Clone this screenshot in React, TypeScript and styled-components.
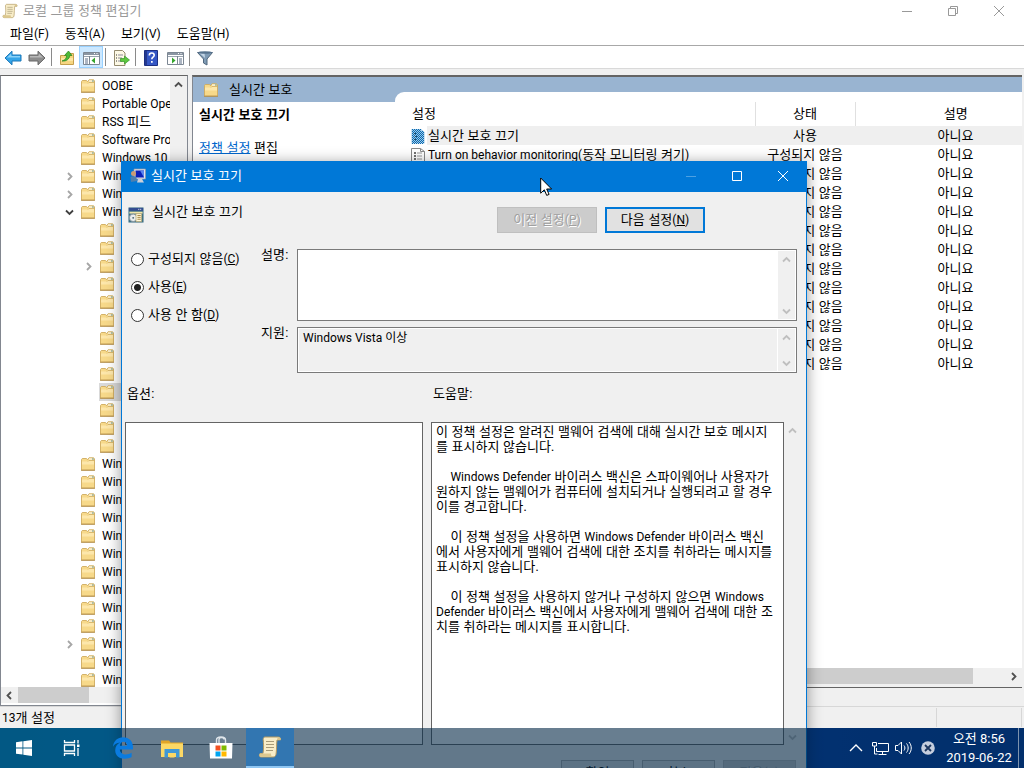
import React, { Fragment } from "react";
import styled, { createGlobalStyle, css } from "styled-components";

const GlobalStyle = createGlobalStyle`
  * { box-sizing: border-box; }
  body {
    margin: 0;
    font: 13px/18px "Liberation Sans", "Noto Sans CJK KR", sans-serif;
    color: #000;
  }
  button, input, textarea { font: inherit; color: inherit; margin: 0; }
`;

/* ---------- text ---------- */

const Latin = styled.span`
  font-family: Roboto, "Liberation Sans", sans-serif;
  font-size: 12px;
  line-height: 1;
`;

/* Sets the Latin words of a Korean label in their own face. */
function Mixed({ text }: { text: string }) {
  const parts = text.split(/([A-Za-z0-9()]+(?: [A-Za-z0-9()]+)*)/);
  return (
    <>
      {parts.map((p, i) =>
        i % 2 ? <Latin key={i}>{p}</Latin> : <Fragment key={i}>{p}</Fragment>
      )}
    </>
  );
}

function Access({ text, letter }: { text: string; letter: string }) {
  return (
    <span>
      {text}
      <Latin>
        (<u>{letter}</u>)
      </Latin>
    </span>
  );
}

/* ---------- icons ---------- */

const Folder = () => (
  <svg width="16" height="16" viewBox="0 0 16 16" aria-hidden="true">
    <path d="M1.500 3.500l.8-1h4.200l1 1.200L9 1.800h4.500l1 .9V14h-13z" fill="#f7d98a" stroke="#cfab5f" strokeWidth=".9" />
    <path d="M9 3h3" stroke="#fff" />
    <path d="M12 3h1.800" stroke="#6aa7c4" />
    <path d="M2 5.500h6l1-1h5v4H2z" fill="#fde7ab" />
    <path d="M8 5.500l1-1h5.500" fill="none" stroke="#d1ae62" strokeWidth=".8" />
    <path d="M1 14.300h14" stroke="#b08c48" strokeWidth=".9" />
  </svg>
);

const Scroll = ({ size = 16 }: { size?: number }) => (
  <svg width={size} height={size} viewBox="0 0 24 24" aria-hidden="true">
    <path
      d="M7 2h13c2 0 3 1.200 2.500 3H19c-.6 4-.2 8-.8 13-.2 2.500-1 4-3 4H3c-1.600 0-2.200-2-1-3.500h3C6 13 5.500 8 5.200 4.500 5.200 3 6 2 7 2z"
      fill="#f8edc8"
      stroke="#b29a63"
    />
    <path d="M19 5c.2-1.500.6-2.500 1.500-3 2 .3 2.500 1.500 2 3z" fill="#d8c48c" />
    <path d="M2 18.500h11c0 2 .4 3 1.800 3.500H3c-1.600 0-2-2-1-3.500z" fill="#dcc88f" />
    <path d="M8 6.500h8M8 9.500h8M8 12.500h8M8 15.500h7" stroke="#a89b78" />
  </svg>
);

const Chevron = ({ dir, color, size = 9 }: { dir: "up" | "down" | "left" | "right"; color: string; size?: number }) => {
  const d = {
    up: "M1 6.500L4.500 3L8 6.500",
    down: "M1 2.500L4.500 6L8 2.500",
    left: "M6 1L2.500 4.500L6 8",
    right: "M3 1L6.500 4.500L3 8",
  }[dir];
  return (
    <svg width={size} height={size} viewBox="0 0 9 9" aria-hidden="true">
      <path d={d} fill="none" stroke={color} strokeWidth="1.800" />
    </svg>
  );
};

const BackArrow = () => (
  <svg width="18" height="16" viewBox="0 0 18 16">
    <path d="M1 8L8 1.200v3.800h9v6H8v3.800z" fill="#35a5e8" stroke="#1b76b8" />
    <path d="M3 7.500L7.300 3.500v2.500h8.700v1.500z" fill="#8bd2f8" />
  </svg>
);
const ForwardArrow = () => (
  <svg width="18" height="16" viewBox="0 0 18 16">
    <path d="M17 8L10 1.200v3.800H1v6h9v3.800z" fill="#8d8d8d" stroke="#666" />
    <path d="M15 7.500L10.700 3.500v2.500H2v1.500z" fill="#b9b9b9" />
  </svg>
);
const UpFolder = () => (
  <svg width="16" height="16" viewBox="0 0 16 16">
    <path d="M1.500 5.500h5l1-2h7v11h-13z" fill="#f6d681" stroke="#c59f4c" />
    <path d="M2 8h12v3H2z" fill="#fde6a4" />
    <path d="M3 11c3.500-1 4.500-3 4.700-5.500H5.500L9.500 1l3.500 4.500h-2.300C10.500 9 7.500 11.500 3 11z" fill="#4cba37" stroke="#25831b" strokeWidth=".7" />
  </svg>
);
const Panes = ({ flip = false }: { flip?: boolean }) => (
  <svg width="17" height="16" viewBox="0 0 17 16">
    <path d="M.5 2.500h16v12H.5z" fill="#fff" stroke="#7c8793" />
    <path d="M1 3h15v2H1z" fill="#8b96a3" />
    <path d="M11 3.500h1M13.500 3.500h1" stroke="#fff" />
    <path d="M1 6.500h15" stroke="#9aa4b0" />
    {flip ? (
      <g>
        <path d="M10.500 6v8.500" stroke="#7c8793" />
        <path d="M12 9h3M12 11h3M12 13h3" stroke="#5a6c86" />
        <path d="M5 7.500L8.500 10.500L5 13.500z" fill="#35a52c" />
      </g>
    ) : (
      <g>
        <path d="M6.500 6v8.500" stroke="#7c8793" />
        <path d="M2 9h3M2 11h3M2 13h3" stroke="#5a6c86" />
        <path d="M12 7.500L8.500 10.500l3.500 3z" fill="#35a52c" />
      </g>
    )}
  </svg>
);
const Export = () => (
  <svg width="17" height="16" viewBox="0 0 17 16">
    <path d="M1.500.500h8L12 3v12.500H1.500z" fill="#fdf9e6" stroke="#948b6f" />
    <path d="M3 5h1M3 8h1M3 11h1" stroke="#333" />
    <path d="M5 5h5M5 8h4M5 11h4" stroke="#8b8b9b" />
    <path d="M7.500 8.500h4V6l5 4-5 4v-2.500h-4z" fill="#5dc83f" stroke="#37952a" strokeWidth=".7" />
  </svg>
);
const Help = () => (
  <svg width="14" height="16" viewBox="0 0 14 16">
    <path d="M.5.500h13v15H.5z" fill="#3557c5" stroke="#1c2f82" />
    <path d="M1 1h2v14H1z" fill="#24398f" />
    <path d="M5.300 5.500C5.300 3.800 6.300 3 7.700 3c1.500 0 2.500.8 2.500 2.200 0 2-2.400 2-2.400 4" fill="none" stroke="#fff" strokeWidth="1.600" />
    <path d="M7 11h1.700v1.800H7z" fill="#fff" />
  </svg>
);
const Funnel = () => (
  <svg width="16" height="16" viewBox="0 0 16 16">
    <path d="M.5 2.500h15L10 9v6L6.500 13V9z" fill="#7f9bb5" stroke="#50677d" />
    <path d="M2.500 3h5L8 8z" fill="#c4d6e6" />
    <ellipse cx="8" cy="2.500" rx="7" ry="1.300" fill="#57738e" />
  </svg>
);
const Sheet = ({ selected = false }: { selected?: boolean }) => (
  <svg width="14" height="16" viewBox="0 0 14 16">
    {selected ? (
      <g>
        <path d="M.5 1h9.500l3.500 3v11.500H.5z" fill="#9cc8e8" />
        <path d="M1 1.500h9M1 3.500h11M1 5.500h12M1 7.500h12M1 9.500h12M1 11.500h12M1 13.500h12M1 15.500h12" stroke="#0a6ab0" strokeDasharray="1 1" />
        <path d="M2 2.500h8M2 4.500h11M2 6.500h11M2 8.500h11M2 10.500h11M2 12.500h11M2 14.500h11" stroke="#0a6ab0" strokeDasharray="1 1" />
        <path d="M3 5.500h2M4 8.500h2M3 11.500h2" stroke="#1c4a66" />
      </g>
    ) : (
      <g>
        <path d="M.5 1.500h9l4 3v11H.5z" fill="#fff" stroke="#8a8a8a" />
        <path d="M9.500 1.500v3h4" fill="none" stroke="#8a8a8a" />
        <path d="M3 6h2M3 9h2M3 12h2" stroke="#444" strokeWidth="1.500" />
        <path d="M6 6h5M6 9h5M6 12h5" stroke="#999" />
      </g>
    )}
  </svg>
);
const PolicyMonitor = () => (
  <svg width="16" height="16" viewBox="0 0 16 16">
    <path d="M4 1h11.500v10H4z" fill="#dfe3ec" stroke="#8c96a8" strokeWidth=".7" />
    <path d="M5.500 2.500h8.500v7H5.500z" fill="#0b1fb8" />
    <path d="M10 2.500h4v7z" fill="#5c86f0" />
    <path d="M8 11h4l2 3.500H7z" fill="#cdd1d9" />
    <circle cx="3.500" cy="5.500" r="2.500" fill="#c99b76" />
    <path d="M.5 9.500C1 8 5.500 7.500 6.500 9.500L7 13l-6 1z" fill="#4d7fae" />
  </svg>
);
const PolicySheet = () => (
  <svg width="16" height="16" viewBox="0 0 17 17">
    <path d="M.5.500h16v16H.5z" fill="#3a6f85" />
    <path d="M1 1h15v3H1z" fill="#344d91" />
    <path d="M11 2.500h1M13 2.500h1" stroke="#fff" />
    <path d="M1.500 5h14v2h-14z" fill="#f1e5a9" />
    <circle cx="5.500" cy="11.500" r="4" fill="#e8ecee" stroke="#85949c" />
    <circle cx="5.500" cy="11.500" r="1" fill="#47636f" />
    <path d="M8.500 7h6v8.500h-6z" fill="#fff7d8" stroke="#b3a067" strokeWidth=".7" />
    <path d="M10 9h3.500M10 11h3.500M10 13h3.500" stroke="#a0803d" />
  </svg>
);

const WinMin = () => (
  <svg width="10" height="10" viewBox="0 0 10 10"><path d="M0 5.500h10" stroke="currentColor" /></svg>
);
const WinMax = () => (
  <svg width="10" height="10" viewBox="0 0 10 10"><path d="M.5.500h9v9h-9z" fill="none" stroke="currentColor" /></svg>
);
const WinRestore = () => (
  <svg width="10" height="10" viewBox="0 0 10 10">
    <path d="M.5 2.500h7v7h-7zM2.500 2.500v-2h7v7h-2" fill="none" stroke="currentColor" />
  </svg>
);
const WinClose = () => (
  <svg width="10" height="10" viewBox="0 0 10 10"><path d="M0 0l10 10M10 0L0 10" stroke="currentColor" /></svg>
);

/* ---------- desktop and main window ---------- */

const Desktop = styled.div`
  position: relative;
  height: 100vh;
  min-height: 400px;
  overflow: hidden;
  display: flex;
  flex-direction: column;
  background: linear-gradient(90deg, #00a0e0 0%, #00a0e8 12%, #0040b0 78%, #003aa5 100%);
`;

const AppWindow = styled.main`
  flex: 1;
  min-height: 0;
  display: flex;
  flex-direction: column;
  background: #f0f0f0;
`;

const TitleBar = styled.header`
  display: flex;
  align-items: center;
  height: 22px;
  padding: 0 2px;
  gap: 5px;
  background: #fff;
  color: #999;
`;

const Title = styled.h1`
  flex: 1;
  margin: 0;
  font-size: 13px;
  line-height: 18px;
  font-weight: 400;
`;

const WindowButton = styled.button<{ $faded?: boolean }>`
  width: 46px;
  height: 20px;
  border: 0;
  padding: 0;
  background: none;
  display: flex;
  align-items: center;
  justify-content: center;
  opacity: ${(p) => (p.$faded ? 0.3 : 1)};
`;

const Controls = styled.div`
  display: flex;
`;

const MenuBar = styled.nav`
  display: flex;
  height: 24px;
  padding: 0 2px;
  background: #fff;
  border-bottom: 1px solid #a8a8a8;
`;

const MenuItem = styled.button`
  border: 0;
  padding: 0 8px;
  background: none;
`;

const ToolBar = styled.div`
  display: flex;
  align-items: center;
  height: 23px;
  padding-left: 1px;
  background: #fff;
  border-bottom: 1px solid #d9d9d9;
`;

const ToolButton = styled.button<{ $on?: boolean }>`
  width: 24px;
  height: 22px;
  padding: 1px 0 0;
  display: flex;
  align-items: center;
  justify-content: center;
  border: 1px solid ${(p) => (p.$on ? "#99d1ff" : "transparent")};
  background: ${(p) => (p.$on ? "#cce8ff" : "none")};
`;

const ToolDivider = styled.span`
  width: 1px;
  height: 18px;
  margin: 0 3px 0 2px;
  background: #8a8a8a;
`;

const Workspace = styled.div`
  flex: 1;
  min-height: 0;
  display: flex;
  gap: 4px;
  padding: 6px 2px 0 0;
`;

const TreePane = styled.aside`
  width: 188px;
  flex: none;
  display: flex;
  flex-direction: column;
  padding-bottom: 2px;
  border: 1px solid #828790;
  border-top-color: #646464;
  background: #fff;
`;

const TreeBody = styled.div`
  flex: 1;
  min-height: 0;
  display: flex;
`;

const Tree = styled.ul`
  flex: 1;
  min-width: 0;
  margin: 0;
  padding: 1px 0 0;
  list-style: none;
  overflow: hidden;
`;

const TreeRow = styled.li<{ $child?: boolean }>`
  display: flex;
  align-items: center;
  gap: 5px;
  height: 18px;
  padding-left: ${(p) => (p.$child ? 81 : 62)}px;
  white-space: nowrap;
`;

const Twisty = styled.span`
  width: 12px;
  flex: none;
  display: flex;
  justify-content: center;
`;

const TreeLabel = styled.span<{ $selected?: boolean }>`
  display: flex;
  align-items: center;
  gap: 6px;
  height: 18px;
  ${(p) =>
    p.$selected &&
    css`
      background: #d9d9d9;
      flex: 1;
    `}
`;

const BarTrack = styled.div<{ $vertical?: boolean }>`
  display: flex;
  flex-direction: ${(p) => (p.$vertical ? "column" : "row")};
  justify-content: space-between;
  background: #f0f0f0;
  ${(p) => (p.$vertical ? "width: 17px;" : "height: 16px;")}
  flex: none;
`;

const BarButton = styled.button`
  width: 17px;
  height: 16px;
  border: 0;
  padding: 0;
  background: none;
  display: flex;
  align-items: center;
  justify-content: center;
`;

const BarThumb = styled.div<{ $grow: number }>`
  flex: ${(p) => p.$grow} 1 0;
  background: #cdcdcd;
`;

const BarSpace = styled.div<{ $grow: number }>`
  flex: ${(p) => p.$grow} 1 0;
`;

function VerticalBar({ color = "#bfbfbf" }: { color?: string }) {
  return (
    <BarTrack $vertical>
      <BarButton type="button" aria-label="위로 스크롤"><Chevron dir="up" color={color} /></BarButton>
      <BarButton type="button" aria-label="아래로 스크롤"><Chevron dir="down" color={color} /></BarButton>
    </BarTrack>
  );
}

function HorizontalBar({ thumb }: { thumb: number }) {
  return (
    <BarTrack>
      <BarButton type="button" aria-label="왼쪽으로 스크롤"><Chevron dir="left" color="#505050" /></BarButton>
      <BarThumb $grow={thumb} />
      <BarSpace $grow={100 - thumb} />
      <BarButton type="button" aria-label="오른쪽으로 스크롤"><Chevron dir="right" color="#505050" /></BarButton>
    </BarTrack>
  );
}

const Details = styled.section`
  flex: 1;
  min-width: 0;
  margin-bottom: 18px;
  display: flex;
  flex-direction: column;
  border: 1px solid #828790;
  border-width: 2px 0 1px 1px;
  border-color: #646464 #e3e3e3 #646464 #828790;
  background: #99b4d1;
`;

const DetailsBody = styled.div`
  flex: 1;
  min-height: 0;
  display: flex;
`;

const Summary = styled.div`
  width: 202px;
  flex: none;
  display: flex;
  flex-direction: column;
`;

const SummaryHeader = styled.div`
  display: flex;
  align-items: center;
  gap: 10px;
  height: 25px;
  padding-left: 10px;
`;

const SummaryText = styled.div`
  flex: 1;
  padding: 4px 6px;
  background: #fff;
`;

const PolicyName = styled.h2`
  margin: 0 0 15px;
  font-size: 13px;
  line-height: 18px;
  font-weight: 700;
`;

const EditLink = styled.a`
  color: #0066cc;
  text-decoration: underline;
`;

const ListPane = styled.div`
  flex: 1;
  min-width: 0;
  margin-top: 15px;
  padding-top: 10px;
  overflow: hidden;
  background: #fff;
  border-top-left-radius: 9px;
`;

const PolicyTable = styled.table`
  width: 100%;
  min-width: 661px;
  table-layout: fixed;
  border-collapse: collapse;
`;

const HeadCell = styled.th<{ $width?: number; $first?: boolean }>`
  width: ${(p) => (p.$width ? `${p.$width}px` : "auto")};
  height: 24px;
  padding: ${(p) => (p.$first ? "0 0 0 17px" : "0")};
  text-align: ${(p) => (p.$first ? "left" : "center")};
  font-weight: 400;
  border-left: ${(p) => (p.$first ? "0" : "1px solid #e0e0e0")};
`;

const Cell = styled.td<{ $selected?: boolean }>`
  height: 19px;
  padding: 0;
  text-align: center;
  white-space: nowrap;
  background: ${(p) => (p.$selected ? "#efefef" : "none")};
`;

const NameCell = styled.td`
  height: 19px;
  padding: 0 0 0 16px;
`;

const NameBox = styled.div`
  display: flex;
  align-items: center;
  gap: 2px;
  height: 19px;
  white-space: nowrap;
`;

const NameText = styled.span<{ $selected?: boolean }>`
  flex: 1;
  height: 19px;
  line-height: 19px;
  padding-left: 1px;
  background: ${(p) => (p.$selected ? "#efefef" : "none")};
`;

const DetailsFoot = styled.div`
  background: #f0f0f0;
  padding-bottom: 3px;
`;

const StatusBar = styled.footer`
  display: flex;
  align-items: stretch;
  height: 22px;
  padding: 1px 2px;
  line-height: 20px;
  border-top: 1px solid #d7d7d7;
`;

const StatusText = styled.div`
  flex: 1;
`;

const StatusCell = styled.div`
  width: 86px;
  border: 1px solid #d7d7d7;
  border-width: 0 1px;
`;

/* ---------- dialog ---------- */

const Dialog = styled.section`
  position: absolute;
  left: 121px;
  top: 161px;
  width: 686px;
  border: 1px solid #0078d7;
  background: #f0f0f0;
  box-shadow: 0 2px 14px rgba(0, 0, 0, 0.4);
`;

const DialogTitle = styled.header`
  display: flex;
  align-items: center;
  gap: 5px;
  height: 30px;
  padding: 0 0 2px 8px;
  background: #0078d7;
  color: #fff;
`;

const DialogHead = styled.div`
  display: flex;
  align-items: flex-start;
  gap: 8px;
  padding: 15px 101px 16px 6px;
`;

const HeadText = styled.span`
  flex: 1;
  line-height: 10px;
`;

const PushButton = styled.button<{ $primary?: boolean; $small?: boolean }>`
  width: ${(p) => (p.$small ? 73 : 100)}px;
  height: 26px;
  padding: 0;
  border: ${(p) => (p.$primary ? "2px solid #0078d7" : "1px solid #adadad")};
  background: #e1e1e1;
  &:disabled {
    border-color: #bfbfbf;
    background: #cccccc;
    color: #a0a0a0;
    text-shadow: 1px 1px 0 #fff;
  }
`;

const Settings = styled.div`
  display: flex;
  padding: 0 9px;
`;

const Choices = styled.div`
  width: 130px;
  flex: none;
  display: flex;
  flex-direction: column;
  gap: 8px;
`;

const Choice = styled.label`
  display: flex;
  align-items: center;
  gap: 4px;
  height: 20px;
  white-space: nowrap;
`;

const Radio = styled.input`
  appearance: none;
  width: 13px;
  height: 13px;
  border: 1px solid #333;
  border-radius: 50%;
  background: #fff;
  &:checked {
    background: radial-gradient(circle, #222 0 3px, #fff 4px);
  }
`;

const Fields = styled.div`
  flex: 1;
  display: grid;
  grid-template-columns: 36px 1fr;
  row-gap: 6px;
`;

const FieldLabel = styled.label`
  line-height: 12px;
`;

const Field = styled.div<{ $tall?: boolean }>`
  display: flex;
  height: ${(p) => (p.$tall ? 72 : 46)}px;
  padding: 1px;
  border: 1px solid #7a7a7a;
  background: #fff;
`;

const TextArea = styled.textarea`
  flex: 1;
  min-width: 0;
  padding: 0 4px;
  border: 0;
  outline: 0;
  resize: none;
  overflow: hidden;
  font-family: Roboto, "Noto Sans CJK KR", sans-serif;
  font-size: 12px;
  line-height: 18px;
  background: #fff;
  &:read-only {
    background: #f0f0f0;
    margin-right: 1px;
  }
`;

const Panels = styled.div`
  display: grid;
  grid-template-columns: 298px 1fr;
  column-gap: 8px;
  padding: 11px 5px 0 3px;
`;

const PanelLabel = styled.h3`
  margin: 0 0 18px;
  padding-left: 2px;
  font-size: 13px;
  line-height: 20px;
  font-weight: 400;
`;

const PanelRow = styled.div`
  display: flex;
  height: 323px;
`;

const PanelBox = styled.div`
  flex: 1;
  padding: 1px 4px;
  border: 1px solid #646464;
  background: #fff;
`;

const Paragraph = styled.p`
  margin: 0 0 15px;
  line-height: 15px;
  white-space: pre;
`;

const DialogFoot = styled.div`
  display: flex;
  justify-content: flex-end;
  gap: 8px;
  padding: 15px 10px 12px;
`;

const Pointer = styled.svg`
  position: absolute;
  left: 540px;
  top: 177px;
`;

/* ---------- taskbar ---------- */

const TaskBar = styled.nav`
  position: relative;
  display: flex;
  height: 40px;
  background: rgba(3, 40, 70, 0.6);
  color: #fff;
`;

const TaskApps = styled.div`
  display: flex;
  gap: 1px;
  padding-left: 3px;
  flex: 1;
`;

const TaskButton = styled.button<{ $active?: boolean }>`
  width: 48px;
  height: 40px;
  padding: 0;
  border: 0;
  border-bottom: ${(p) => (p.$active ? "2px solid #8fc6f2" : "0")};
  display: flex;
  align-items: center;
  justify-content: center;
  background: ${(p) => (p.$active ? "#3276b1" : "none")};
`;

const TrayButton = styled.button`
  width: 24px;
  padding: 0;
  border: 0;
  background: none;
  display: flex;
  align-items: center;
  justify-content: center;
`;

const Clock = styled.time`
  width: 78px;
  padding-top: 1px;
  text-align: center;
  font-family: Roboto, "Noto Sans CJK KR", sans-serif;
  line-height: 19px;
`;

const ShowDesktop = styled.button`
  width: 6px;
  padding: 0;
  border: 0;
  border-left: 1px solid #7d93ae;
  background: none;
`;

const tree: { name?: string; state?: "open" | "closed"; child?: boolean; selected?: boolean }[] = [
  { name: "OOBE" },
  { name: "Portable Operating System" },
  { name: "RSS 피드" },
  { name: "Software Protection Platform" },
  { name: "Windows 10" },
  { name: "Windows", state: "closed" },
  { name: "Windows", state: "closed" },
  { name: "Windows", state: "open" },
  ...Array.from({ length: 13 }, (_, i) => ({
    child: true,
    state: i === 2 ? ("closed" as const) : undefined,
    selected: i === 9,
  })),
  ...Array.from({ length: 13 }, (_, i) => ({
    name: "Windows",
    state: i === 10 ? ("closed" as const) : undefined,
  })),
];

const policies = [
  { name: "실시간 보호 끄기", state: "사용" },
  { name: "Turn on behavior monitoring(동작 모니터링 켜기)", state: "구성되지 않음" },
  ...Array.from({ length: 11 }, () => ({ name: "", state: "구성되지 않음" })),
];

const help = [
  ["이 정책 설정은 알려진 맬웨어 검색에 대해 실시간 보호 메시지", "를 표시하지 않습니다."],
  [
    "    Windows Defender 바이러스 백신은 스파이웨어나 사용자가",
    "원하지 않는 맬웨어가 컴퓨터에 설치되거나 실행되려고 할 경우",
    "이를 경고합니다.",
  ],
  [
    "    이 정책 설정을 사용하면 Windows Defender 바이러스 백신",
    "에서 사용자에게 맬웨어 검색에 대한 조치를 취하라는 메시지를",
    "표시하지 않습니다.",
  ],
  [
    "    이 정책 설정을 사용하지 않거나 구성하지 않으면 Windows",
    "Defender 바이러스 백신에서 사용자에게 맬웨어 검색에 대한 조",
    "치를 취하라는 메시지를 표시합니다.",
  ],
];

export default function App() {
  return (
    <Desktop>
      <GlobalStyle />
      <AppWindow>
        <TitleBar>
          <Scroll />
          <Title>로컬 그룹 정책 편집기</Title>
          <Controls>
            <WindowButton type="button" aria-label="최소화"><WinMin /></WindowButton>
            <WindowButton type="button" aria-label="이전 크기로 복원"><WinRestore /></WindowButton>
            <WindowButton type="button" aria-label="닫기"><WinClose /></WindowButton>
          </Controls>
        </TitleBar>
        <MenuBar>
          {["파일(F)", "동작(A)", "보기(V)", "도움말(H)"].map((m) => (
            <MenuItem type="button" key={m}><Mixed text={m} /></MenuItem>
          ))}
        </MenuBar>
        <ToolBar>
          <ToolButton type="button" aria-label="뒤로"><BackArrow /></ToolButton>
          <ToolButton type="button" aria-label="앞으로"><ForwardArrow /></ToolButton>
          <ToolDivider />
          <ToolButton type="button" aria-label="한 수준 위로"><UpFolder /></ToolButton>
          <ToolButton type="button" aria-label="콘솔 트리 표시" $on><Panes /></ToolButton>
          <ToolDivider />
          <ToolButton type="button" aria-label="목록 내보내기"><Export /></ToolButton>
          <ToolDivider />
          <ToolButton type="button" aria-label="도움말"><Help /></ToolButton>
          <ToolButton type="button" aria-label="작업 창 표시"><Panes flip /></ToolButton>
          <ToolDivider />
          <ToolButton type="button" aria-label="필터"><Funnel /></ToolButton>
        </ToolBar>
        <Workspace>
          <TreePane>
            <TreeBody>
              <Tree>
                {tree.map((n, i) => (
                  <TreeRow key={i} $child={n.child}>
                    <Twisty>
                      {n.state && (
                        <Chevron
                          dir={n.state === "open" ? "down" : "right"}
                          color={n.state === "open" ? "#404040" : "#a6a6a6"}
                        />
                      )}
                    </Twisty>
                    <TreeLabel $selected={n.selected}>
                      <Folder />
                      {n.name && <span><Mixed text={n.name} /></span>}
                    </TreeLabel>
                  </TreeRow>
                ))}
              </Tree>
              <VerticalBar color="#505050" />
            </TreeBody>
            <HorizontalBar thumb={47} />
          </TreePane>
          <Details>
            <DetailsBody>
              <Summary>
                <SummaryHeader>
                  <Folder />
                  <span>실시간 보호</span>
                </SummaryHeader>
                <SummaryText>
                  <PolicyName>실시간 보호 끄기</PolicyName>
                  <EditLink href="#edit">정책 설정</EditLink> 편집
                </SummaryText>
              </Summary>
              <ListPane>
                <PolicyTable>
                  <thead>
                    <tr>
                      <HeadCell $width={360} $first>설정</HeadCell>
                      <HeadCell $width={100}>상태</HeadCell>
                      <HeadCell>설명</HeadCell>
                    </tr>
                  </thead>
                  <tbody>
                    {policies.map((p, i) => (
                      <tr key={i}>
                        <NameCell>
                          <NameBox>
                            <Sheet selected={i === 0} />
                            <NameText $selected={i === 0}><Mixed text={p.name} /></NameText>
                          </NameBox>
                        </NameCell>
                        <Cell $selected={i === 0}>{p.state}</Cell>
                        <Cell $selected={i === 0}>아니요</Cell>
                      </tr>
                    ))}
                  </tbody>
                </PolicyTable>
              </ListPane>
            </DetailsBody>
            <DetailsFoot><HorizontalBar thumb={96} /></DetailsFoot>
          </Details>
        </Workspace>
        <StatusBar>
          <StatusText><Mixed text="13개 설정" /></StatusText>
          <StatusCell />
        </StatusBar>
      </AppWindow>

      <Dialog role="dialog" aria-label="실시간 보호 끄기">
        <DialogTitle>
          <PolicyMonitor />
          <Title as="h2">실시간 보호 끄기</Title>
          <Controls>
            <WindowButton type="button" aria-label="최소화" $faded><WinMin /></WindowButton>
            <WindowButton type="button" aria-label="최대화"><WinMax /></WindowButton>
            <WindowButton type="button" aria-label="닫기"><WinClose /></WindowButton>
          </Controls>
        </DialogTitle>
        <DialogHead>
          <PolicySheet />
          <HeadText>실시간 보호 끄기</HeadText>
          <PushButton type="button" disabled><Access text="이전 설정" letter="P" /></PushButton>
          <PushButton type="button" $primary><Access text="다음 설정" letter="N" /></PushButton>
        </DialogHead>
        <Settings>
          <Choices>
            <Choice><Radio type="radio" name="state" /><Access text="구성되지 않음" letter="C" /></Choice>
            <Choice><Radio type="radio" name="state" defaultChecked /><Access text="사용" letter="E" /></Choice>
            <Choice><Radio type="radio" name="state" /><Access text="사용 안 함" letter="D" /></Choice>
          </Choices>
          <Fields>
            <FieldLabel htmlFor="comment">설명:</FieldLabel>
            <Field $tall>
              <TextArea id="comment" />
              <VerticalBar />
            </Field>
            <FieldLabel htmlFor="supported">지원:</FieldLabel>
            <Field>
              <TextArea id="supported" readOnly defaultValue="Windows Vista 이상" />
              <VerticalBar />
            </Field>
          </Fields>
        </Settings>
        <Panels>
          <div>
            <PanelLabel>옵션:</PanelLabel>
            <PanelRow><PanelBox /></PanelRow>
          </div>
          <div>
            <PanelLabel>도움말:</PanelLabel>
            <PanelRow>
              <PanelBox>
                {help.map((lines, i) => (
                  <Paragraph key={i}><Mixed text={lines.join("\n")} /></Paragraph>
                ))}
              </PanelBox>
              <VerticalBar />
            </PanelRow>
          </div>
        </Panels>
        <DialogFoot>
          <PushButton type="button" $small>확인</PushButton>
          <PushButton type="button" $small>취소</PushButton>
          <PushButton type="button" $small disabled><Access text="적용" letter="A" /></PushButton>
        </DialogFoot>
      </Dialog>

      <TaskBar>
        <TaskButton type="button" aria-label="시작">
          <svg width="16" height="16" viewBox="0 0 16 16">
            <path d="M0 2.200L6.500 1.300v6.200H0zM7.300 1.200L16 0v7.500H7.300zM0 8.400h6.500v6.200L0 13.700zM7.300 8.400H16V16l-8.700-1.200z" fill="#fff" />
          </svg>
        </TaskButton>
        <TaskButton type="button" aria-label="작업 보기">
          <svg width="18" height="16" viewBox="0 0 18 16" fill="none" stroke="#fff" strokeWidth="1.300">
            <path d="M1.500 0v2.500h10V0M1.500 5h10v6h-10zM1.500 16v-2.500h10V16M15 0v3.500M15 8v8" />
            <path d="M14 4.500h2.500v2.500H14z" fill="#fff" stroke="none" />
          </svg>
        </TaskButton>
        <TaskApps>
          <TaskButton type="button" aria-label="Microsoft Edge">
            <svg width="20" height="22" viewBox="0 0 20 22">
              <path
                d="M0 9.700C.6 4 4.600.3 10.200.3c6 0 9.800 4.300 9.800 10v2.200H6.800c.3 3.500 3 5 6 5 2 0 4-.6 5.800-1.700v4.300c-1.900 1.100-4.300 1.600-6.800 1.600-5.800 0-9.600-3.200-9.600-8.500 0-3.500 1.900-6.300 5-7.700C3.800 6 1.400 7.200 0 9.700zM6.900 8.800h7c0-2.500-1.200-4-3.400-4-2 0-3.300 1.500-3.600 4z"
                fill="#0a7be0"
              />
            </svg>
          </TaskButton>
          <TaskButton type="button" aria-label="파일 탐색기">
            <svg width="22" height="19" viewBox="0 0 22 19">
              <path d="M0 1.500h8l1.500 2H22V18H0z" fill="#e2a527" />
              <path d="M0 4.500h22V18H0z" fill="#fcd865" />
              <path d="M3.500 18.500V10h15v8.500H15v-4.500H7v4.500z" fill="#4098d7" />
              <path d="M8.500 14h5v4.500h-5z" fill="#fcd865" />
            </svg>
          </TaskButton>
          <TaskButton type="button" aria-label="Microsoft Store">
            <svg width="24" height="24" viewBox="0 0 24 24">
              <path d="M7.500 7V4c0-4 9-4 9 0v3M10 7V3.500c0-2.500 5-2.500 5 0" fill="none" stroke="#dfe5ea" strokeWidth="1.400" />
              <path d="M.5 7h23l-.5 15.500H1z" fill="#fff" />
              <path d="M6.500 9.500h5v5h-5z" fill="#f25022" />
              <path d="M12.500 9.500h5v5h-5z" fill="#7fba00" />
              <path d="M6.500 15.500h5v5h-5z" fill="#00a4ef" />
              <path d="M12.500 15.500h5v5h-5z" fill="#ffb900" />
            </svg>
          </TaskButton>
          <TaskButton type="button" aria-label="로컬 그룹 정책 편집기" $active><Scroll size={24} /></TaskButton>
        </TaskApps>
        <TrayButton type="button" aria-label="숨겨진 아이콘 표시">
          <svg width="14" height="8" viewBox="0 0 14 8"><path d="M1 7l6-6 6 6" fill="none" stroke="#fff" strokeWidth="1.400" /></svg>
        </TrayButton>
        <TrayButton type="button" aria-label="네트워크">
          <svg width="17" height="15" viewBox="0 0 17 15" fill="none" stroke="#fff">
            <path d="M6 2.500h10.500v8H4.500V7M10.500 10.500v3M6.500 13.500h8" />
            <path d="M.5 1.500h4v3.500h-4zM2.500 5v8h3" />
          </svg>
        </TrayButton>
        <TrayButton type="button" aria-label="볼륨">
          <svg width="18" height="14" viewBox="0 0 18 14" fill="none" stroke="#fff">
            <path d="M.5 4.500h2.500L6.500 1v12L3 9.500H.5z" />
            <path d="M9 4.500c1.200 1.500 1.200 3.500 0 5M11.500 2.500c2.200 2.500 2.200 6.500 0 9M14 1c3 3.500 3 8.500 0 12" />
          </svg>
        </TrayButton>
        <TrayButton type="button" aria-label="보안 경고">
          <svg width="14" height="14" viewBox="0 0 14 14">
            <circle cx="7" cy="7" r="6.800" fill="#c5cede" />
            <path d="M4 4l6 6M10 4l-6 6" stroke="#1c365f" strokeWidth="1.800" />
          </svg>
        </TrayButton>
        <Clock>
          오전 8:56
          <br />
          2019-06-22
        </Clock>
        <ShowDesktop type="button" aria-label="바탕 화면 보기" />
      </TaskBar>

      <Pointer width="13" height="20" viewBox="0 0 13 20" aria-hidden="true">
        <path d="M.7 1v15.200l3.600-3.400 2.400 5.600 2.400-1-2.400-5.400h4.900z" fill="#fff" stroke="#000" />
      </Pointer>
    </Desktop>
  );
}
